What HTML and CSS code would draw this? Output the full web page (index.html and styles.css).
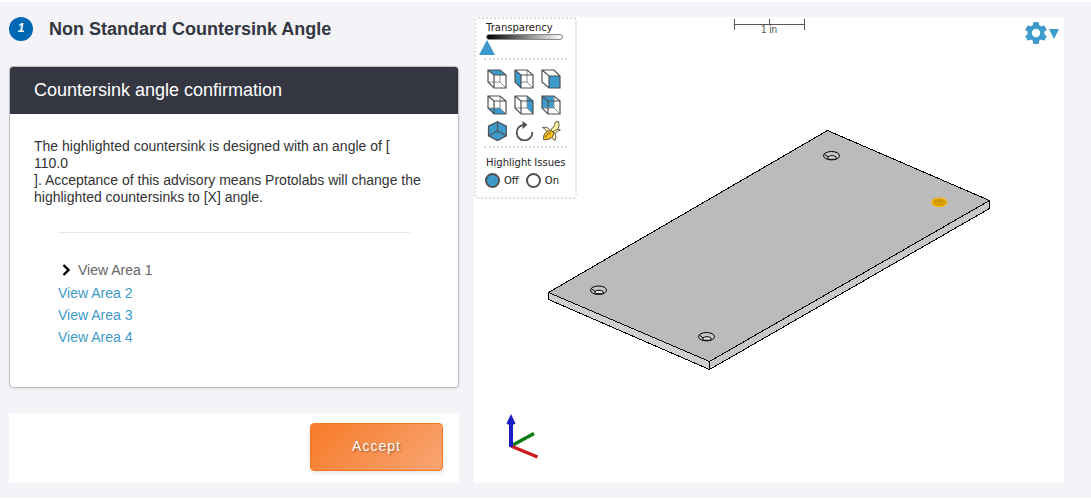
FILE: index.html
```html
<!DOCTYPE html>
<html lang="en">
<head>
<meta charset="utf-8">
<title>Non Standard Countersink Angle</title>
<link rel="stylesheet" href="styles.css">
</head>
<body>
<main class="page">
  <section class="advisory">
    <header class="step">
      <span class="step-number">1</span>
      <h1 class="step-title">Non Standard Countersink Angle</h1>
    </header>
    <article class="card">
      <h2 class="card-title">Countersink angle confirmation</h2>
      <div class="card-body">
        <p class="message">The highlighted countersink is designed with an angle of [<br>110.0<br>]. Acceptance of this advisory means Protolabs will change the highlighted countersinks to [X] angle.</p>
        <ul class="areas">
          <li class="current"><svg class="chevron" width="8" height="12" viewBox="0 0 8 12"><path d="M1.500 1 6.500 6 1.500 11" fill="none" stroke="#000" stroke-width="2.400"/></svg><a href="#area-1" aria-current="true">View Area 1</a></li>
          <li><a href="#area-2">View Area 2</a></li>
          <li><a href="#area-3">View Area 3</a></li>
          <li><a href="#area-4">View Area 4</a></li>
        </ul>
      </div>
    </article>
    <footer class="actions">
      <button class="accept" type="button">Accept</button>
    </footer>
  </section>

  <section class="viewer" aria-label="Part viewer">
    <svg class="scene" viewBox="474 17 590 466">
      <g fill="none" stroke="#555" stroke-width="1" shape-rendering="crispEdges">
        <path d="M734.5 19V30M804.5 19V30M734.5 24.5H804.5M769.5 19V24"/>
      </g>
      <text class="scale-label" x="769" y="33" text-anchor="middle">1 in</text>
      <g stroke="#000" stroke-width="1" stroke-linejoin="round" shape-rendering="crispEdges">
        <path fill="#d0d0d0" d="M548.5 292.5 709.5 361.5V369.5L548.5 299.5Z"/>
        <path fill="#c8c8c8" d="M709.5 361.5 989.5 200.5V208.5L709.5 369.5Z"/>
        <path fill="#bbb" d="M827.5 130.5 989.5 200.5 709.5 361.5 548.5 292.5Z"/>
      </g>
      <defs>
        <g id="hole">
          <ellipse rx="8" ry="4.2" fill="#c4c4c4"/>
          <path d="M-3.500 3.500V1.200C-2-.4 3-.4 4.500 1.200V3.500Z" fill="#e4e4e4"/>
          <path d="M-7-1.500-3.500 1.200" fill="none"/>
        </g>
      </defs>
      <g stroke="#000" stroke-width="1">
        <use href="#hole" x="831.5" y="155.7"/>
        <use href="#hole" x="598.5" y="290.2"/>
        <use href="#hole" x="706.5" y="336.7"/>
      </g>
      <g stroke="#f8b800" stroke-width="1.400">
        <ellipse cx="939.3" cy="202.3" rx="7.400" ry="4.200" fill="#cf9700"/>
        <path d="M933 200.500 936 203V206M945.500 200.500 943 203V206M936 203H943" fill="none" stroke="#eaa900" stroke-width="1"/>
      </g>
      <path d="M511 446 534 433.500" stroke="#0a7a12" stroke-width="3.400"/>
      <path d="M511 446 537.500 457" stroke="#d01818" stroke-width="3.400"/>
      <path d="M511 447V422" stroke="#1c1cc4" stroke-width="4"/>
      <path d="M511 414 515.500 423.500 511 426 506.500 423.500Z" fill="#1c1cc4"/>
    </svg>

    <div class="tools">
      <label class="tool-label" for="transparency">Transparency</label>
      <input class="slider" id="transparency" type="range" min="0" max="100" value="0">
      <div class="views">
        <button type="button" aria-label="Top view"><svg viewBox="0 0 20 20"><path class="back" d="M1 13H13V1M13 13 19 19"/><path class="face" d="M1 1H13L19 6H7Z"/><path class="edge" d="M1 1H13L19 6V19H7L1 13ZM1 1 7 6H19M7 6V19"/></svg></button>
        <button type="button" aria-label="Left view"><svg viewBox="0 0 20 20"><path class="back" d="M1 13H13V1M13 13 19 19"/><path class="face" d="M1 1 7 6V19L1 13Z"/><path class="edge" d="M1 1H13L19 6V19H7L1 13ZM1 1 7 6H19M7 6V19"/></svg></button>
        <button type="button" aria-label="Front view"><svg viewBox="0 0 20 20"><path class="face" d="M8 7H19V19H8Z"/><path class="edge" d="M1 1H13L19 7V19H8L1 13ZM1 1 8 7H19M8 7V19"/></svg></button>
        <button type="button" aria-label="Bottom view"><svg viewBox="0 0 20 20"><path class="face" d="M1 13H13L19 19H7Z"/><path class="back" d="M1 13H13V1M13 13 19 19"/><path class="edge" d="M1 1H13L19 6V19H7L1 13ZM1 1 7 6H19M7 6V19"/></svg></button>
        <button type="button" aria-label="Right view"><svg viewBox="0 0 20 20"><path class="face" d="M13 1 19 6V19L13 13Z"/><path class="back" d="M1 13H13V1M13 13 19 19"/><path class="edge" d="M1 1H13L19 6V19H7L1 13ZM1 1 7 6H19M7 6V19"/></svg></button>
        <button type="button" aria-label="Back view"><svg viewBox="0 0 20 20"><path class="face" d="M1 1H13V13H1Z"/><path class="back" d="M1 13H13V1M13 13 19 19"/><path class="edge" d="M1 1H13L19 6V19H7L1 13ZM1 1 7 6H19M7 6V19"/></svg></button>
        <button type="button" aria-label="Isometric view"><svg viewBox="0 0 20 20"><path class="face" d="M10.500 .5 19.500 5V15L10.500 20 1.500 15V5Z"/><path class="edge" d="M10.500 .7 19.300 5.200V14.800L10.500 19.600 1.500 14.800V5.200ZM10.500 .7V10L1.500 14.800M10.500 10 19.300 14.800"/></svg></button>
        <button type="button" aria-label="Rotate"><svg viewBox="0 0 20 20"><path d="M18.300 11A7.800 7.800 0 1 1 10 3.800" fill="none" stroke="#505055" stroke-width="1.800"/><path d="M8.500 0 13.500 3.800 8.500 8Z" fill="#505055"/></svg></button>
        <button type="button" aria-label="Banana"><svg viewBox="0 0 20 20" stroke="#4d4530" stroke-width=".9" stroke-linejoin="round"><path d="M14.500 1 17.500 .6 18 3.500C18 7 16 10.500 13 12L9 9.500C12 7.500 13.500 4.500 14.500 1Z" fill="#fff2a0"/><path d="M10 10C8 7 4.500 5.500 1.500 6.500 4 7.500 5 9 6 11.500Z" fill="#fff5c0"/><path d="M12.500 10.500C15 8.500 17 8 19.300 9 17 9.500 15.500 11.500 13 13Z" fill="#fff5c0"/><path d="M12 10.500C15 13 15.500 16 14 19.500 11.500 18 10 15.500 10 12Z" fill="#fff5c0"/><path d="M10.500 9.800C5.500 9 2 13 2.500 18.500 7.500 19.500 12.500 17 12.800 11.500Z" fill="#f9c21b"/><path d="M4.500 16.500C5 14 7 12.500 9.500 12" fill="none"/></svg></button>
      </div>
      <fieldset class="issues">
        <legend class="tool-label">Highlight Issues</legend>
        <div class="choices">
          <label class="choice"><input type="radio" name="issues" checked><span>Off</span></label>
          <label class="choice"><input type="radio" name="issues"><span>On</span></label>
        </div>
      </fieldset>
    </div>

    <button class="settings" type="button" aria-label="Settings">
      <svg width="22" height="22" viewBox="0 0 22 22"><g fill="#3d9bcb"><circle cx="11" cy="11" r="8.500"/><rect x="8" y="0" width="6" height="22" rx="1.500"/><rect x="8" y="0" width="6" height="22" rx="1.500" transform="rotate(60 11 11)"/><rect x="8" y="0" width="6" height="22" rx="1.500" transform="rotate(120 11 11)"/></g><circle cx="11" cy="11" r="4.200" fill="#fff"/></svg>
      <svg class="caret" width="10" height="10" viewBox="0 0 10 10"><path d="M0 0H10L5 10Z" fill="#3d9bcb"/></svg>
    </button>
  </section>
</main>
</body>
</html>
```
FILE: styles.css
```css
*, *::before, *::after { box-sizing: border-box; }

body {
  margin: 0;
  background: #f3f3f8;
  color: #333;
  font-family: "Liberation Sans", Arial, sans-serif;
  font-size: 14px;
}

button { font: inherit; cursor: pointer; }

.page {
  display: grid;
  grid-template-columns: minmax(0, 450fr) minmax(0, 590fr);
  gap: 15px;
  min-height: 100vh;
  padding: 15px 27px 15px 9px;
  border-top: 2px solid #fff;
  border-bottom: 1px solid #fff;
}

.advisory { display: flex; flex-direction: column; }

.step {
  display: flex;
  align-items: center;
  gap: 16px;
  margin-bottom: 25px;
}

.step-number {
  flex: none;
  width: 24px;
  height: 24px;
  border-radius: 50%;
  background: #0068b3;
  color: #fff;
  font-size: 12px;
  font-style: italic;
  font-weight: bold;
  line-height: 23px;
  text-align: center;
}

.step-title {
  margin: 0;
  color: #343741;
  font-size: 18px;
  line-height: 24px;
}

.card {
  flex: 1;
  overflow: hidden;
  border: 1px solid #bfbfc3;
  border-radius: 4px;
  background: #fff;
  box-shadow: 0 1px 3px rgba(0, 0, 0, .08);
}

.card-title {
  margin: 0;
  padding: 0 24px 1px;
  background: #343741;
  color: #fff;
  font-size: 18px;
  font-weight: normal;
  line-height: 46px;
}

.card-body { padding: 24px 24px 38px; }

.message { margin: 0; line-height: 17px; }

.areas {
  margin: 26px 24px 0;
  padding: 26px 0 0;
  border-top: 1px solid #e8e8e8;
  list-style: none;
  line-height: 22px;
}

.areas a { color: #3d9bcb; text-decoration: none; }

.areas .current {
  display: flex;
  align-items: center;
  gap: 8px;
  margin-bottom: 1px;
  padding-left: 4px;
}

.areas .current a { color: #666; }

.actions {
  display: flex;
  justify-content: flex-end;
  margin-top: 25px;
  padding: 10px 16px 12px;
  background: #fff;
}

.accept {
  width: 133px;
  height: 48px;
  padding: 0 0 2px;
  border: 1px solid #f9751f;
  border-radius: 4px;
  background: linear-gradient(135deg, #f77a28, #f8a573);
  box-shadow: 0 2px 4px rgba(0, 0, 0, .1);
  color: #fff;
  font-size: 14px;
  letter-spacing: 1px;
  text-shadow: 1px 1px 2px rgba(0, 0, 0, .4);
}

.viewer {
  position: relative;
  min-height: 466px;
  background: #fff;
}

.scene { display: block; width: 100%; height: 100%; }

.scale-label { fill: #555; font-size: 10px; }

.tools {
  position: absolute;
  top: 0;
  left: 0;
  width: 103px;
  padding: 3px 8px 9px;
  border: 2px dotted #ddd;
  border-radius: 4px;
  background: #fff;
  font-family: "DejaVu Sans", Verdana, sans-serif;
  font-size: 10px;
  color: #222;
}

.tool-label {
  display: block;
  padding: 0 0 0 2px;
  line-height: 12px;
  white-space: nowrap;
}

.slider {
  appearance: none;
  display: block;
  width: 77px;
  height: 6px;
  margin: 0 0 18px 2px;
  border: 1px solid #888;
  border-radius: 4px;
  background: linear-gradient(90deg, #000, #fff);
}

.slider::-webkit-slider-runnable-track { height: 4px; }

.slider::-webkit-slider-thumb {
  appearance: none;
  width: 16px;
  height: 15px;
  margin: 5px 0 0 -8px;
  background: #3d9bcb;
  clip-path: polygon(50% 0, 100% 100%, 0 100%);
}

.views {
  display: grid;
  grid-template-columns: repeat(3, 20px);
  gap: 6px 7px;
  padding: 9px 0 5px 3px;
  border: dotted #ddd;
  border-width: 2px 0;
}

.views button {
  width: 20px;
  height: 20px;
  padding: 0;
  border: 0;
  background: none;
}

.views svg { display: block; width: 20px; height: 20px; }

.face { fill: #3d9bcb; }
.edge { fill: none; stroke: #505055; stroke-width: 1.2; }
.back { fill: none; stroke: #909094; stroke-width: 1; }

.issues { margin: 9px 0 0; padding: 0; border: 0; }

.choices { display: flex; gap: 7px; margin: 4px 0 0 1px; }

.choice { display: flex; align-items: center; gap: 4px; }

.choice input {
  appearance: none;
  width: 15px;
  height: 15px;
  margin: 0;
  border: 2px solid #505055;
  border-radius: 50%;
  background: #fff;
}

.choice input:checked { background: #3d9bcb; }

.settings {
  position: absolute;
  top: 5px;
  right: 5px;
  display: flex;
  align-items: center;
  gap: 2px;
  padding: 0;
  border: 0;
  background: none;
}

.caret { margin-top: 2px; }
```
